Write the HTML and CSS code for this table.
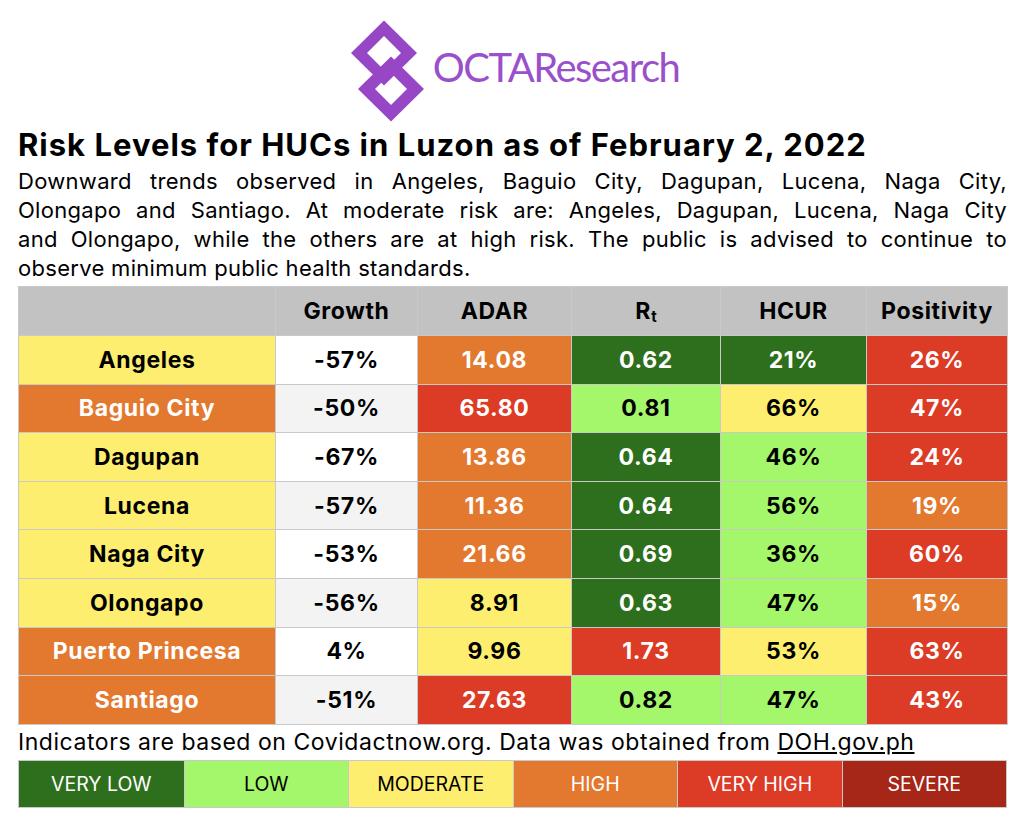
FILE: index.html
```html
<!DOCTYPE html>
<html lang="en">
<head>
<meta charset="utf-8">
<title>Risk Levels for HUCs in Luzon</title>
<link rel="stylesheet" href="styles.css">
</head>
<body>
<div class="page">
  <header class="brand">
    <svg class="brand-icon" width="85" height="105" viewBox="0 0 85 105" aria-hidden="true">
      <path fill="#9747c6" fill-rule="evenodd" d="M38 2.5 L71 35 L38 67.5 L5 35 Z M38 18 L55 35 L38 52 L21 35 Z"/>
      <path fill="#9747c6" fill-rule="evenodd" d="M45 38.5 L78 71 L45 103.5 L12 71 Z M45 55 L61 71 L45 87 L29 71 Z"/>
    </svg>
    <span class="brand-name">OCTAResearch</span>
  </header>

  <h1 class="title">Risk Levels for HUCs in Luzon as of February 2, 2022</h1>
  <div class="desc">
    <span class="line">Downward trends observed in Angeles, Baguio City, Dagupan, Lucena, Naga City,</span>
    <span class="line">Olongapo and Santiago. At moderate risk are: Angeles, Dagupan, Lucena, Naga City</span>
    <span class="line">and Olongapo, while the others are at high risk. The public is advised to continue to</span>
    <span class="line last">observe minimum public health standards.</span>
  </div>

  <table class="risk">
    <colgroup>
      <col class="c-name"><col class="c-growth"><col class="c-adar"><col class="c-rt"><col class="c-hcur"><col class="c-pos">
    </colgroup>
    <thead>
      <tr><th></th><th>Growth</th><th>ADAR</th><th>R<sub>t</sub></th><th>HCUR</th><th>Positivity</th></tr>
    </thead>
    <tbody>
      <tr><td class="yl">Angeles</td><td class="wh">-57%</td><td class="or">14.08</td><td class="dg">0.62</td><td class="dg">21%</td><td class="rd">26%</td></tr>
      <tr><td class="or">Baguio City</td><td class="gy">-50%</td><td class="rd">65.80</td><td class="lg">0.81</td><td class="yl">66%</td><td class="rd">47%</td></tr>
      <tr><td class="yl">Dagupan</td><td class="wh">-67%</td><td class="or">13.86</td><td class="dg">0.64</td><td class="lg">46%</td><td class="rd">24%</td></tr>
      <tr><td class="yl">Lucena</td><td class="gy">-57%</td><td class="or">11.36</td><td class="dg">0.64</td><td class="lg">56%</td><td class="or">19%</td></tr>
      <tr><td class="yl">Naga City</td><td class="wh">-53%</td><td class="or">21.66</td><td class="dg">0.69</td><td class="lg">36%</td><td class="rd">60%</td></tr>
      <tr><td class="yl">Olongapo</td><td class="gy">-56%</td><td class="yl">8.91</td><td class="dg">0.63</td><td class="lg">47%</td><td class="or">15%</td></tr>
      <tr><td class="or">Puerto Princesa</td><td class="wh">4%</td><td class="yl">9.96</td><td class="rd">1.73</td><td class="yl">53%</td><td class="rd">63%</td></tr>
      <tr><td class="or">Santiago</td><td class="gy">-51%</td><td class="rd">27.63</td><td class="lg">0.82</td><td class="lg">47%</td><td class="rd">43%</td></tr>
    </tbody>
  </table>

  <p class="source">Indicators are based on Covidactnow.org. Data was obtained from <span class="link">DOH.gov.ph</span></p>

  <div class="legend">
    <div class="dg">VERY LOW</div>
    <div class="lg">LOW</div>
    <div class="yl">MODERATE</div>
    <div class="or">HIGH</div>
    <div class="rd">VERY HIGH</div>
    <div class="sv">SEVERE</div>
  </div>
</div>
</body>
</html>
```

FILE: styles.css
```css
html, body {
  margin: 0;
  padding: 0;
  background: #ffffff;
}

body {
  font-family: Inter, "Liberation Sans", Arial, sans-serif;
  color: #000000;
}

.page {
  width: 989px;
  margin-left: 18px;
}

/* brand header */
.brand {
  height: 129px;
  padding-top: 18px;
  box-sizing: border-box;
  display: flex;
  justify-content: center;
  align-items: flex-start;
  gap: 2px;
}

.brand-icon {
  display: block;
  flex: none;
}

.brand-name {
  font-family: Lato, "Open Sans", sans-serif;
  font-size: 40px;
  line-height: 48px;
  letter-spacing: -1.55px;
  color: #9b50cb;
  margin-top: 25px;
}

/* title + description */
.title {
  margin: 0;
  font-size: 31px;
  line-height: 32px;
  letter-spacing: 1px;
  font-weight: 700;
  height: 38px;
  white-space: nowrap;
}

.desc {
  font-size: 22px;
  line-height: 29px;
  letter-spacing: 0.3px;
  height: 119px;
}

.desc .line {
  display: block;
  white-space: nowrap;
  text-align: justify;
  text-align-last: justify;
}

.desc .line.last {
  text-align: left;
  text-align-last: left;
}

/* table */
.risk {
  width: 989px;
  border-collapse: collapse;
  table-layout: fixed;
  font-size: 23px;
  letter-spacing: 0.65px;
  font-weight: 700;
}

.c-name { width: 257px; }
.c-growth { width: 142px; }
.c-adar { width: 154px; }
.c-rt { width: 149px; }
.c-hcur { width: 146px; }
.c-pos { width: 141px; }

.risk th,
.risk td {
  border: 1px solid #c9c9c9;
  padding: 0;
  text-align: center;
  vertical-align: middle;
  white-space: nowrap;
}

.risk thead tr {
  height: 49px;
}

.risk th {
  background: #c1c2c1;
  font-weight: 700;
}

.risk th sub {
  font-size: 15px;
  vertical-align: -3px;
  line-height: 0;
  letter-spacing: 0;
}

.risk tbody tr {
  height: 48.6px;
}

.wh { background: #ffffff; color: #000000; }
.gy { background: #f3f3f3; color: #000000; }
.yl { background: #fdee70; color: #000000; }
.lg { background: #a4f66b; color: #000000; }
.dg { background: #2e6f1d; color: #ffffff; }
.or { background: #e3782f; color: #ffffff; }
.rd { background: #dc3b26; color: #ffffff; }
.sv { background: #a62617; color: #ffffff; }

/* footer line */
.source {
  margin: 0;
  font-size: 23px;
  line-height: 35px;
  letter-spacing: 0.55px;
  height: 35px;
  white-space: nowrap;
}

.source .link {
  text-decoration: underline;
}

/* legend */
.legend {
  display: grid;
  grid-template-columns: repeat(6, 1fr);
  height: 48px;
  border: 1px solid #c9c9c9;
  box-sizing: border-box;
  font-size: 19.5px;
}

.legend div {
  display: flex;
  align-items: center;
  justify-content: center;
  border-left: 1px solid #c9c9c9;
}

.legend div:first-child {
  border-left: none;
}
```
